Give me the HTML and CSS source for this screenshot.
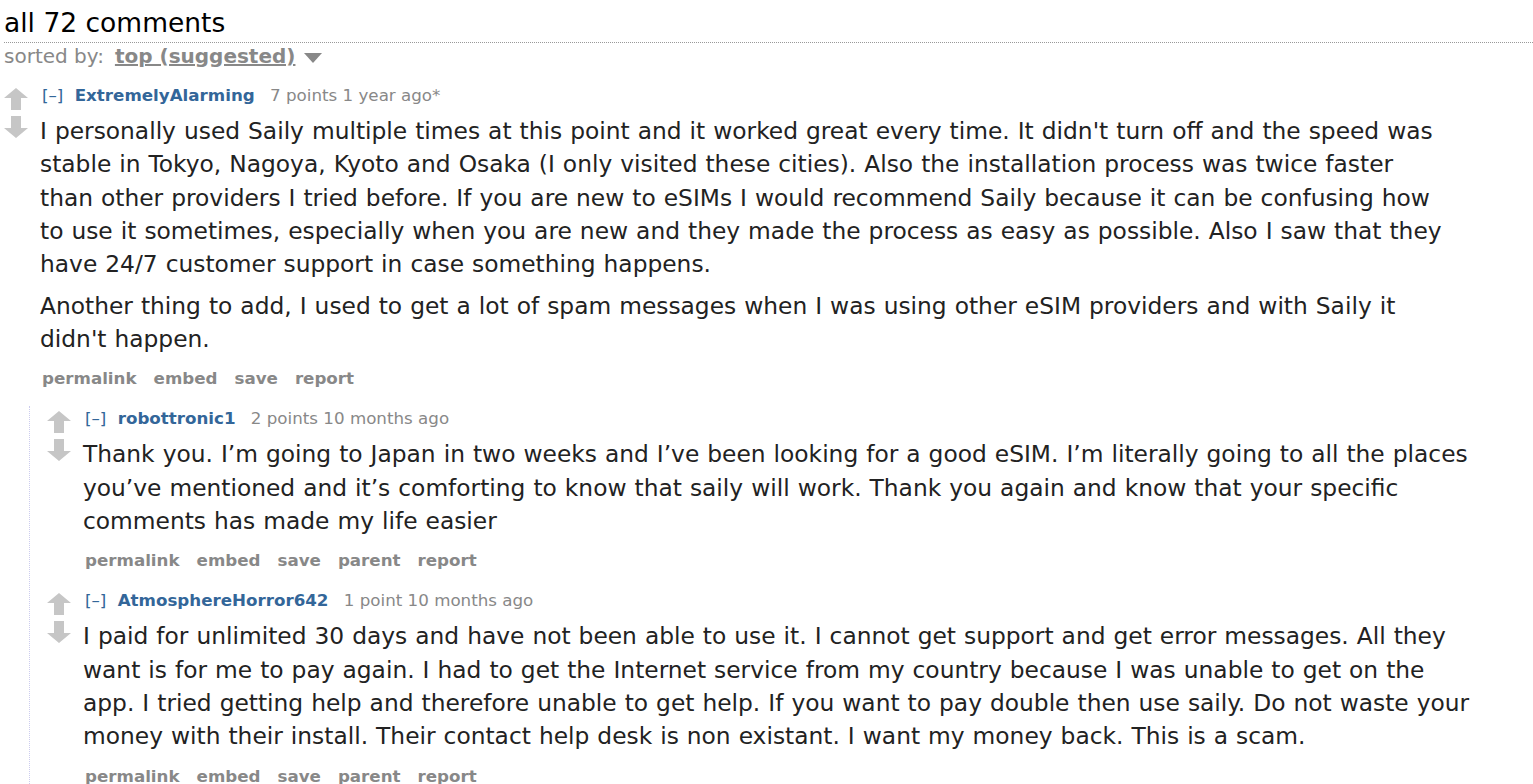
FILE: index.html
```html
<!DOCTYPE html>
<html lang="en">
<head>
    <meta charset="UTF-8">
    <title>all 72 comments</title>
    <link rel="stylesheet" href="styles.css">
</head>
<body>
    <div class="commentarea">
        <div class="panestack-title">
            <span class="title">all 72 comments</span>
        </div>
        <div class="menuarea">
            <span class="dropdown-title">sorted by:</span>
            <span class="selected">top (suggested)</span>
            <span class="droparrow"></span>
        </div>

        <div class="comment">
            <div class="midcol">
                <svg class="arrow" width="24" height="22" viewBox="0 0 24 22"><path d="M12 0 L24 10 L17 10 L17 22 L7 22 L7 10 L0 10 Z" fill="#c6c6c6"/></svg>
                <svg class="arrow down" width="24" height="22" viewBox="0 0 24 22"><path d="M12 22 L24 12 L17 12 L17 0 L7 0 L7 12 L0 12 Z" fill="#c6c6c6"/></svg>
            </div>
            <div class="entry">
                <p class="tagline">
                    <a class="expand">[–]</a>
                    <a class="author">ExtremelyAlarming</a>
                    <span class="score">7 points</span> <span class="time">1 year ago*</span>
                </p>
                <div class="md">
                    <p>I personally used Saily multiple times at this point and it worked great every time. It didn't turn off and the speed was stable in Tokyo, Nagoya, Kyoto and Osaka (I only visited these cities). Also the installation process was twice faster than other providers I tried before. If you are new to eSIMs I would recommend Saily because it can be confusing how to use it sometimes, especially when you are new and they made the process as easy as possible. Also I saw that they have 24/7 customer support in case something happens.</p>
                    <p>Another thing to add, I used to get a lot of spam messages when I was using other eSIM providers and with Saily it didn't happen.</p>
                </div>
                <ul class="buttons">
                    <li>permalink</li>
                    <li>embed</li>
                    <li>save</li>
                    <li>report</li>
                </ul>
            </div>
        </div>

        <div class="child">
            <div class="comment">
                <div class="midcol">
                    <svg class="arrow" width="24" height="22" viewBox="0 0 24 22"><path d="M12 0 L24 10 L17 10 L17 22 L7 22 L7 10 L0 10 Z" fill="#c6c6c6"/></svg>
                    <svg class="arrow down" width="24" height="22" viewBox="0 0 24 22"><path d="M12 22 L24 12 L17 12 L17 0 L7 0 L7 12 L0 12 Z" fill="#c6c6c6"/></svg>
                </div>
                <div class="entry">
                    <p class="tagline">
                        <a class="expand">[–]</a>
                        <a class="author">robottronic1</a>
                        <span class="score">2 points</span> <span class="time">10 months ago</span>
                    </p>
                    <div class="md">
                        <p>Thank you. I’m going to Japan in two weeks and I’ve been looking for a good eSIM. I’m literally going to all the places you’ve mentioned and it’s comforting to know that saily will work. Thank you again and know that your specific comments has made my life easier</p>
                    </div>
                    <ul class="buttons">
                        <li>permalink</li>
                        <li>embed</li>
                        <li>save</li>
                        <li>parent</li>
                        <li>report</li>
                    </ul>
                </div>
            </div>

            <div class="comment">
                <div class="midcol">
                    <svg class="arrow" width="24" height="22" viewBox="0 0 24 22"><path d="M12 0 L24 10 L17 10 L17 22 L7 22 L7 10 L0 10 Z" fill="#c6c6c6"/></svg>
                    <svg class="arrow down" width="24" height="22" viewBox="0 0 24 22"><path d="M12 22 L24 12 L17 12 L17 0 L7 0 L7 12 L0 12 Z" fill="#c6c6c6"/></svg>
                </div>
                <div class="entry">
                    <p class="tagline">
                        <a class="expand">[–]</a>
                        <a class="author">AtmosphereHorror642</a>
                        <span class="score">1 point</span> <span class="time">10 months ago</span>
                    </p>
                    <div class="md">
                        <p>I paid for unlimited 30 days and have not been able to use it. I cannot get support and get error messages. All they want is for me to pay again. I had to get the Internet service from my country because I was unable to get on the<br>app. I tried getting help and therefore unable to get help. If you want to pay double then use saily. Do not waste your money with their install. Their contact help desk is non existant. I want my money back. This is a scam.</p>
                    </div>
                    <ul class="buttons">
                        <li>permalink</li>
                        <li>embed</li>
                        <li>save</li>
                        <li>parent</li>
                        <li>report</li>
                    </ul>
                </div>
            </div>
        </div>
    </div>
</body>
</html>
```

FILE: styles.css
```css
body {
    margin: 0;
    font-family: Verdana, "DejaVu Sans", sans-serif;
    background-color: #ffffff;
    color: #222;
    overflow: hidden;
}
.commentarea {
    padding-left: 4px;
}
.panestack-title {
    padding-top: 7px;
    padding-bottom: 3px;
    border-bottom: 1px dotted #999;
}
.title {
    font-size: 26.5px;
    line-height: 32px;
    color: #000;
}
.menuarea {
    font-size: 20px;
    line-height: 26px;
    color: #888;
    display: flex;
    align-items: center;
}
.dropdown-title {
    margin-right: 11px;
}
.selected {
    font-weight: bold;
    text-decoration: underline;
}
.droparrow {
    width: 0;
    height: 0;
    margin-left: 9px;
    margin-top: 3px;
    border-left: 9px solid transparent;
    border-right: 9px solid transparent;
    border-top: 10px solid #888;
}
.commentarea > .comment {
    margin-top: 14px;
}
.comment {
    display: flex;
}
.midcol {
    width: 36px;
    flex-shrink: 0;
    display: flex;
    flex-direction: column;
    padding-top: 5px;
}
.arrow {
    display: block;
}
.arrow.down {
    margin-top: 6px;
}
.entry {
    max-width: 1410px;
}
.tagline {
    margin: 0;
    font-size: 16.7px;
    line-height: 24px;
    color: #888;
    padding-left: 2px;
}
.expand {
    color: #369;
    margin-right: 6px;
}
.author {
    color: #369;
    font-weight: bold;
    margin-right: 10px;
}
.md {
    margin-top: 8px;
    font-size: 23.33px;
    line-height: 33.33px;
    word-spacing: 0.6px;
    color: #222;
}
.md p {
    margin: 0;
}
.md p + p {
    margin-top: 8px;
}
.buttons {
    list-style: none;
    margin: 10px 0 0;
    padding: 0 0 0 2px;
    display: flex;
    gap: 17px;
    font-size: 16.7px;
    line-height: 24px;
    font-weight: bold;
    color: #888;
}
.child {
    margin-left: 25px;
    margin-top: 16px;
    padding-left: 17px;
    border-left: 1px dotted #ccccee;
}
.child .comment + .comment {
    margin-top: 16px;
}
```
